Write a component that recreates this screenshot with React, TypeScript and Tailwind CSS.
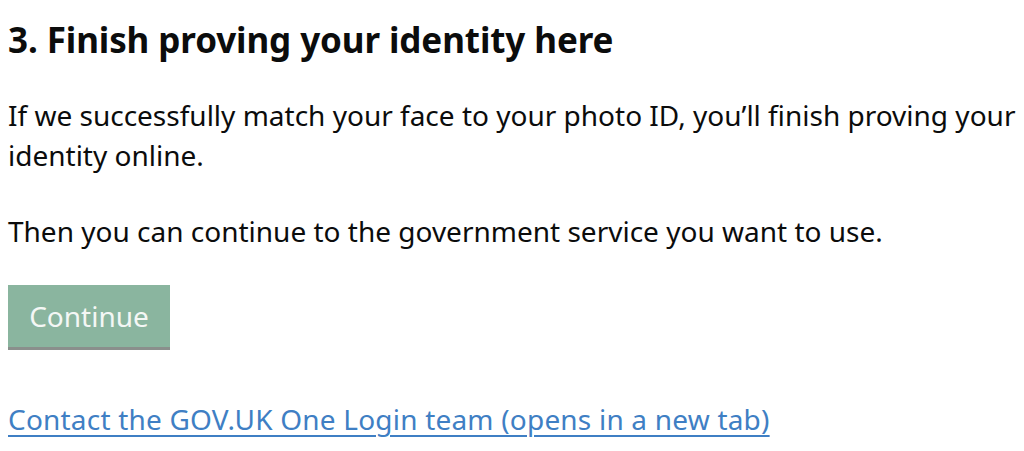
import React from 'react';

export default function App() {
  return (
    <div className="w-[1024px] h-[451px] overflow-hidden bg-white text-[#0b0c0c] px-[8px] pt-[17px]" style={{ fontFamily: '"Noto Sans", Arial, sans-serif' }}>
      <h1 className="text-[35px] leading-[46px] font-bold tracking-[-0.1px]">3. Finish proving your identity here</h1>
      <p className="mt-[32px] text-[28px] leading-[40px]">
        If we successfully match your face to your photo ID, you’ll finish proving your identity online.
      </p>
      <p className="mt-[36px] text-[28px] leading-[40px]">
        Then you can continue to the government service you want to use.
      </p>
      <button className="mt-[34px] block w-[162px] h-[62px] bg-[#8ab59f] text-[#f4f7f5] text-[28px] shadow-[0_3px_0_#8a8f8c]">
        Continue
      </button>
      <a href="#" className="mt-[52px] inline-block text-[28px] leading-[40px] tracking-[0.2px] text-[#3f7fc4] underline underline-offset-[5px] decoration-[2px]">
        Contact the GOV.UK One Login team (opens in a new tab)
      </a>
    </div>
  );
}
